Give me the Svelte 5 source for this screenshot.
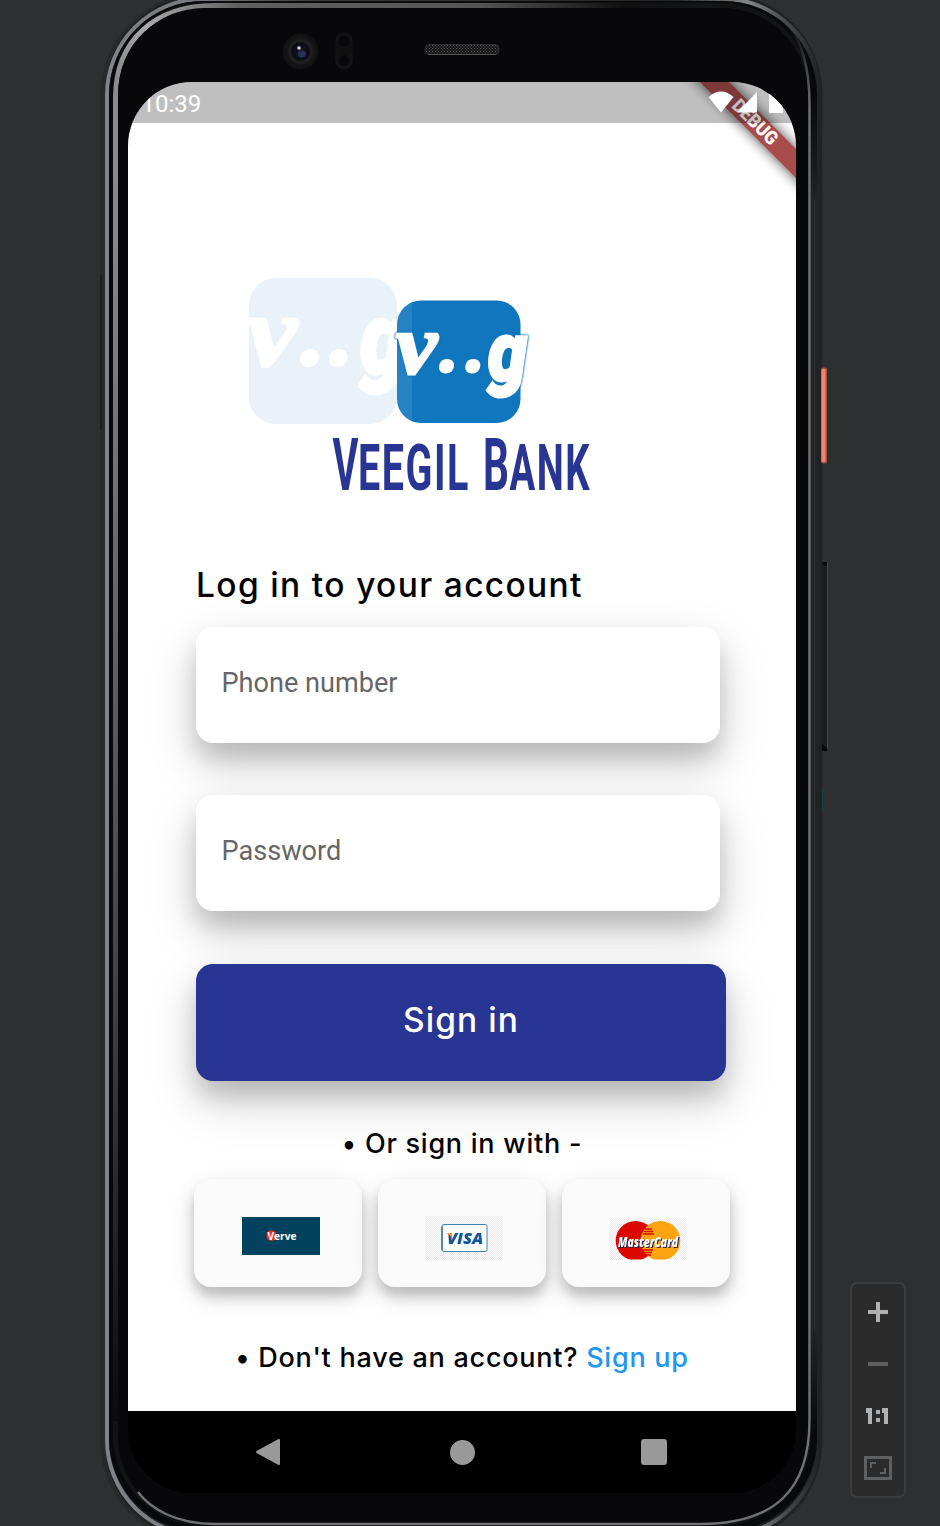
<script>
  const fields = ['Phone number', 'Password'];
</script>

<main class="stage">
  <svg class="frame" width="940" height="1526" viewBox="0 0 940 1526" aria-hidden="true">
    <defs>
      <linearGradient id="rim" x1="0" x2="1" y1="0" y2="0">
        <stop offset="0" stop-color="#828388" />
        <stop offset=".12" stop-color="#77787b" />
        <stop offset=".3" stop-color="#3a3a3b" />
        <stop offset=".8" stop-color="#242526" />
        <stop offset=".9" stop-color="#85888a" />
        <stop offset=".95" stop-color="#4a4b4c" />
        <stop offset="1" stop-color="#202224" />
      </linearGradient>
      <linearGradient id="bevel" x1="0" x2="1" y1="0" y2="0">
        <stop offset="0" stop-color="#8a8a8a" />
        <stop offset=".05" stop-color="#aaa" />
        <stop offset=".2" stop-color="#606060" />
        <stop offset=".6" stop-color="#555" />
        <stop offset=".84" stop-color="#101011" />
        <stop offset="1" stop-color="#151617" />
      </linearGradient>
      <linearGradient id="leftfade" x1="0" x2="0" y1="0" y2="1">
        <stop offset="0" stop-color="#8c8c8c" />
        <stop offset=".12" stop-color="#858585" />
        <stop offset=".7" stop-color="#3e3e40" />
        <stop offset="1" stop-color="#0b0b0c" />
      </linearGradient>
      <linearGradient id="side" x1="0" x2="0" y1="0" y2="1">
        <stop offset="0" stop-color="#212325" stop-opacity="0" />
        <stop offset=".08" stop-color="#212325" />
        <stop offset=".92" stop-color="#212325" />
        <stop offset="1" stop-color="#212325" stop-opacity="0" />
      </linearGradient>
      <linearGradient id="inner" gradientUnits="userSpaceOnUse" x1="0" x2="0" y1="20" y2="1526">
        <stop offset="0" stop-color="#707173" stop-opacity="0" />
        <stop offset=".06" stop-color="#707173" />
        <stop offset="1" stop-color="#707173" />
      </linearGradient>
      <radialGradient id="lens">
        <stop offset="0" stop-color="#171a28" />
        <stop offset=".45" stop-color="#0b0c12" />
        <stop offset=".6" stop-color="#222223" />
        <stop offset=".75" stop-color="#151515" />
        <stop offset="1" stop-color="#101010" />
      </radialGradient>
      <pattern id="mesh" width="3" height="3" patternUnits="userSpaceOnUse">
        <rect width="3" height="3" fill="#151515" />
        <path d="M0 0h1v1h-1zM1.5 1.5h1v1h-1z" fill="#505050" />
      </pattern>
    </defs>
    <rect x="100.500" y="-7" width="722" height="1551" rx="102" fill="#29292a" />
    <path d="M101 275V430" stroke="#1f1f20" stroke-width="2" />
    <rect x="105" y="-5" width="717" height="1546" rx="98" fill="#1f2123" />
    <rect x="107" y="-1" width="712.500" height="1537" rx="96" fill="none" stroke="url(#rim)" stroke-width="4" />
    <rect x="109" y="1" width="708" height="1531" rx="94" fill="#08090a" />
    <rect x="811" y="96" width="8" height="1340" fill="url(#side)" />
    <rect x="814" y="200" width="1" height="1130" fill="#2c2e30" />
    <rect x="113" y="2.500" width="698" height="1523" rx="90" fill="#131314" />
    <path d="M115.500 98C115.500 40 155 5.500 215 5.500H720" fill="none" stroke="url(#bevel)" stroke-width="5" />
    <rect x="113" y="96" width="5" height="1325" fill="url(#leftfade)" />
    <rect x="118" y="8" width="690" height="1515" rx="86" fill="#08080a" />
    <path d="M785 22C801 38 809.500 65 809.500 105V1420C809.500 1490 775 1524 700 1524H215C175 1524 150 1508 138 1492" fill="none" stroke="url(#inner)" stroke-width="2.400" />
    <circle cx="300.500" cy="51.500" r="18" fill="url(#lens)" />
    <ellipse cx="302" cy="54" rx="4" ry="3.500" fill="#303a61" opacity=".8" />
    <circle cx="299" cy="48" r="1.800" fill="#d5d3df" />
    <rect x="336" y="33" width="16" height="36" rx="8" fill="#111112" stroke="#171718" />
    <circle cx="344" cy="41" r="6" fill="#08080a" stroke="#151516" />
    <circle cx="344" cy="60.500" r="6" fill="#08080a" stroke="#151516" />
    <rect x="425" y="44.500" width="74" height="10" rx="4" fill="url(#mesh)" stroke="#2c2c2c" />
    <path d="M428 54.500H496" stroke="#555" />
    <rect x="821" y="367.500" width="6" height="96" rx="2" fill="#a3503f" />
    <rect x="821.500" y="369" width="4" height="93" rx="1" fill="#f4836f" />
    <rect x="821" y="562" width="6" height="188" fill="#1c1d1d" />
    <path d="M827.500 562V748" stroke="#454545" />
    <path d="M822 562h5v4h-3zM822 744l5 4v3h-5z" fill="#080808" />
    <path d="M822.500 789V812" stroke="#14423f" />
  </svg>

  <section class="screen">
    <svg class="banner" width="130" height="130" viewBox="666 82 130 130">
      <defs>
        <filter id="soft" x="-30%" y="-30%" width="160%" height="160%"><feGaussianBlur stdDeviation="7" /></filter>
      </defs>
      <path d="M690 72L719 72L811 164V193Z" fill="#000" opacity=".72" filter="url(#soft)" />
      <path d="M690 72H719L811 164V193Z" fill="#aa4b4c" />
      <text transform="translate(755.500 121.500) rotate(45)" x="-28" y="7" textLength="56" lengthAdjust="spacingAndGlyphs" class="debug">DEBUG</text>
    </svg>
    <header class="status">
      <span>10:39</span>
      <svg width="88" height="41" viewBox="708 82 88 41" fill="#fff">
        <path d="M708.500 97C716 89.500 726 89.500 733.500 97L721 112.500Z" />
        <path d="M757 92V112.500H737Z" />
        <path d="M769 94h14v19h-13.200q-.8 0-.8-.8Z" />
      </svg>
    </header>

    <svg class="brand" width="668" height="430" viewBox="128 123 668 430">
      <rect x="249" y="278" width="148" height="146" rx="27" fill="#e9f2f9" />
      <g class="script pale">
        <text class="v" x="247" y="365" textLength="50" lengthAdjust="spacingAndGlyphs">v</text>
        <text class="dots" x="300" y="365" textLength="56">..</text>
        <text class="g" x="360" y="373" textLength="46" lengthAdjust="spacingAndGlyphs">g</text>
      </g>
      <rect x="397" y="300.500" width="123.500" height="122.500" rx="24" fill="#1076bd" />
      <path d="M397 324.500A24 24 0 0 1 412 302V421A24 24 0 0 1 397 399Z" fill="#fff" opacity=".09" />
      <g class="script">
        <text class="v" x="396" y="373" textLength="41" lengthAdjust="spacingAndGlyphs">v</text>
        <text class="dots" x="439" y="372" textLength="48">..</text>
        <text class="g" x="488" y="380" textLength="39" lengthAdjust="spacingAndGlyphs">g</text>
      </g>
      <g class="name">
        <text x="332.500" y="490" font-size="73" textLength="26" lengthAdjust="spacingAndGlyphs">V</text>
        <text x="358" y="490" font-size="64" letter-spacing="2.500" textLength="112" lengthAdjust="spacingAndGlyphs">EEGIL</text>
        <text x="483" y="490" font-size="73" textLength="26" lengthAdjust="spacingAndGlyphs">B</text>
        <text x="509.500" y="490" font-size="64" letter-spacing="2.500" textLength="81.500" lengthAdjust="spacingAndGlyphs">ANK</text>
      </g>
    </svg>

    <div class="form">
      <h1>Log in to your account</h1>
      {#each fields as label}
        <div class="field">{label}</div>
      {/each}
      <button>Sign in</button>
    </div>

    <p class="or">• Or sign in with -</p>

    <div class="cards">
      <div class="card">
        <svg width="78" height="38" viewBox="0 0 78 38">
          <rect width="78" height="38" fill="#02425e" />
          <circle cx="29.500" cy="18.500" r="5.200" fill="#ee2c2b" />
          <text x="25.500" y="23" class="verve" textLength="29" lengthAdjust="spacingAndGlyphs">Verve</text>
        </svg>
      </div>
      <div class="card visa-card">
        <svg width="78" height="45" viewBox="0 0 78 45">
          <defs>
            <pattern id="check" width="2" height="2" patternUnits="userSpaceOnUse">
              <rect width="2" height="2" fill="#fcfcfc" />
              <path d="M0 0h1v1H0zM1 1h1v1H1z" fill="#ebebeb" />
            </pattern>
          </defs>
          <rect width="78" height="45" fill="url(#check)" shape-rendering="crispEdges" />
          <rect x="17" y="8.500" width="45" height="27" rx="2" fill="#fdfdfd" stroke="#4580b3" />
          <path d="M17 10.500V34" stroke="#0b559c" />
          <text x="22" y="28" class="visa" textLength="36" lengthAdjust="spacingAndGlyphs">VISA</text>
          <path d="M21 17h4.500l1.500 5Q24.500 18 21 17Z" fill="#f5a11b" />
        </svg>
      </div>
      <div class="card master-card">
        <svg width="78" height="42" viewBox="0 0 78 42">
          <rect width="78" height="42" fill="url(#check)" />
          <clipPath id="mc"><rect width="78" height="41.500" /></clipPath>
          <g clip-path="url(#mc)">
            <circle cx="26.500" cy="22.700" r="19.800" fill="#dc0700" />
            <circle cx="51.500" cy="22.700" r="19.800" fill="#fda410" />
          </g>
          <path d="M36 11h7M35 13.500h9M34 16h11M34 32h10M35 34.500h8M37 37h5" stroke="#dc0700" stroke-width="1.300" />
          <text x="9" y="28.500" class="master" textLength="60" lengthAdjust="spacingAndGlyphs">MasterCard</text>
        </svg>
      </div>
    </div>

    <p class="join">• Don't have an account? <a href="#signup">Sign up</a></p>

    <nav>
      <svg width="26" height="28" viewBox="0 0 26 28"><path d="M2 14L24 2V26Z" fill="#999" stroke="#999" stroke-width="2" stroke-linejoin="round" /></svg>
      <span class="home"></span>
      <span class="recent"></span>
    </nav>
  </section>

  <aside>
    <svg width="56" height="216" viewBox="850 1282 56 216" fill="#afb1b3">
      <path d="M868 1310h8v-8h4v8h8v4h-8v8h-4v-8h-8z" />
      <path d="M868 1362h20v4h-20z" fill="#5f6061" />
      <path d="M866 1408h6v16h-4v-11h-2zM876 1410h4v4h-4zM876 1418h4v4h-4zM882 1408h6v16h-4v-11h-2z" />
      <g fill="none" stroke="#5f6061">
        <rect x="865.500" y="1457.500" width="25" height="21" stroke-width="3" />
        <path d="M871 1468V1463H876M880 1473H885V1468" stroke-width="2" />
      </g>
    </svg>
  </aside>
</main>

<style>
  :global(body) { margin: 0; background: #2e2f31; }
  .stage {
    position: relative;
    width: 940px;
    height: 1526px;
    overflow: hidden;
    display: flex;
    align-items: flex-start;
    box-sizing: border-box;
    padding: 82px 0 0 128px;
    background: #2e2f31;
  }
  .frame { position: absolute; left: 0; top: 0; }
  .screen {
    position: relative;
    display: flex;
    flex-direction: column;
    width: 668px;
    height: 1411px;
    flex: none;
    background: linear-gradient(#fff 95%, #000 95%);
    border-radius: 64px;
    overflow: hidden;
  }
  .banner { position: absolute; right: 0; top: 0; }
  .debug { font: 900 19px Roboto, sans-serif; fill: #fff; }
  .status {
    position: relative;
    display: flex;
    justify-content: space-between;
    height: 41px;
    flex: none;
    background: rgba(0, 0, 0, .25);
    color: #fff;
    font: 24px/44px Roboto, sans-serif;
  }
  .status span { padding-left: 13.500px; }
  .brand { flex: none; display: block; }
  .script { fill: #fff; stroke: #fff; filter: drop-shadow(0 0 .8px #1076bd) drop-shadow(0 0 .4px #1076bd); }
  .script .v { font: italic 700 84px "Liberation Serif", serif; stroke-width: 3px; }
  .script .dots { font: italic 700 76px "Open Sans", sans-serif; stroke-width: 2px; }
  .script .g { font: italic 900 82px Roboto, sans-serif; stroke-width: 3px; }
  .script.pale { filter: none; }
  .script.pale .v { font-size: 100px; }
  .script.pale .dots { font-size: 96px; }
  .script.pale .g { font-size: 99px; }
  .name { font-family: Roboto, sans-serif; font-weight: 700; fill: #283593; }
  .form {
    display: flex;
    flex-direction: column;
    padding: 12px 70px 0 68px;
    flex: none;
  }
  h1 {
    flex: none;
    margin: 0 0 21.500px;
    height: 40px;
    font: 500 33.500px/40px Inter, sans-serif;
    letter-spacing: 1.350px;
    color: #000;
    white-space: nowrap;
  }
  .field {
    box-sizing: border-box;
    width: 524px;
    height: 116px;
    flex: none;
    margin-bottom: 52.500px;
    padding-left: 25.500px;
    border-radius: 17px;
    background: #fff;
    color: #666;
    font: 27.100px/113px Roboto, sans-serif;
    box-shadow: 0 16px 22px rgba(0, 0, 0, .15), 0 20px 50px rgba(0, 0, 0, .18);
  }
  button {
    width: 530px;
    height: 117px;
    flex: none;
    border: 0;
    padding: 0 0 4px;
    border-radius: 17px;
    background: #283593;
    color: #fff;
    font: 500 33.500px/40px Inter, sans-serif;
    letter-spacing: 1.100px;
    box-shadow: 0 16px 22px rgba(0, 0, 0, .15), 0 20px 50px rgba(0, 0, 0, .18);
  }
  p {
    position: relative;
    margin: 0;
    flex: none;
    text-align: center;
    font: 500 27px/36px Inter, sans-serif;
    letter-spacing: .750px;
    color: #000;
    white-space: nowrap;
  }
  .or { margin-top: 45px; }
  .cards { display: flex; gap: 15.500px; margin: 17.500px 0 0 66px; flex: none; }
  .card {
    box-sizing: border-box;
    width: 168.300px;
    height: 108px;
    padding: 38px 0 0 48px;
    border-radius: 17px;
    background: #fafafa;
    box-shadow: 0 9px 12px rgba(0, 0, 0, .18), 0 9px 26px rgba(0, 0, 0, .14);
  }
  .card svg { display: block; }
  .visa-card { padding: 37px 0 0 47.500px; }
  .master-card { padding: 39px 0 0 47px; }
  .verve { font: 700 11px "Open Sans", sans-serif; fill: #fff; }
  .visa { font: italic 800 15.500px "Open Sans", sans-serif; fill: #0b559c; }
  .master {
    font: italic 800 14px "Open Sans", sans-serif;
    fill: #fff;
    filter: drop-shadow(1.200px 1px 0 #24214c);
  }
  .join { margin-top: 52.500px; }
  a { color: #2196f3; text-decoration: none; }
  nav {
    display: flex;
    align-items: center;
    height: 82px;
    margin-top: auto;
    flex: none;
    padding-left: 127px;
    background: #000;
  }
  .home { width: 25px; height: 25px; margin-left: 168.500px; border-radius: 50%; background: #999; }
  .recent { width: 26px; height: 26px; margin-left: 166px; border-radius: 3px; background: #999; }
  aside {
    box-sizing: border-box;
    width: 56px;
    height: 216px;
    flex: none;
    margin: 1200px 0 0 54px;
    border: 2px solid #3b3c3d;
    border-radius: 7px;
    background: #2b2b2b;
  }
  aside svg { display: block; margin: -2px; }
</style>
